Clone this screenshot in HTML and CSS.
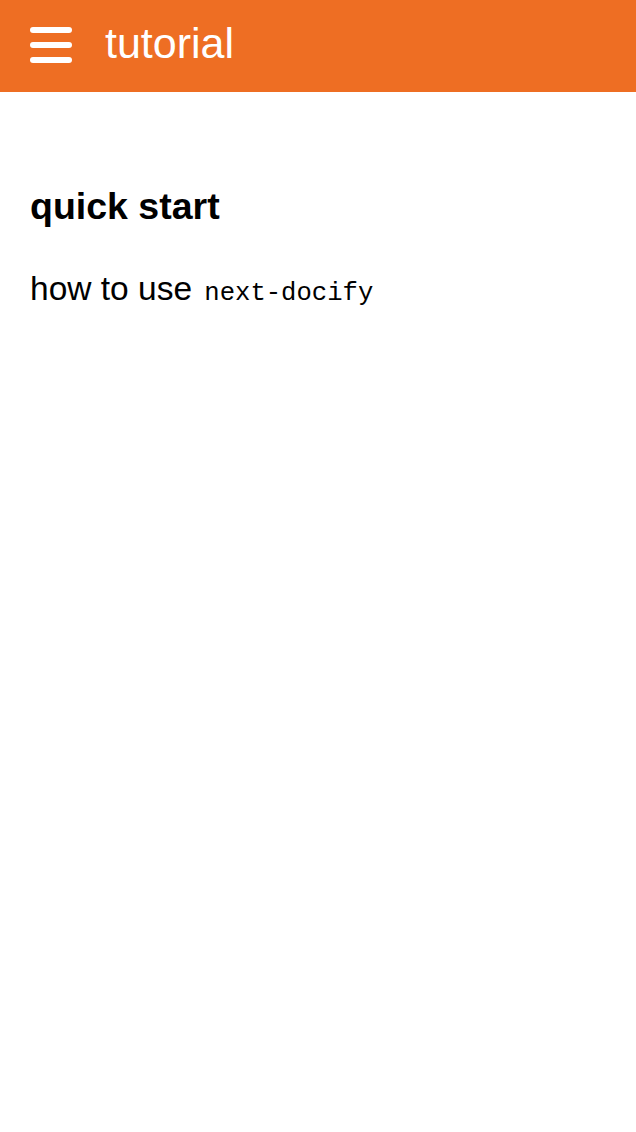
FILE: index.html
```html
<!DOCTYPE html>
<html>
<head>
<meta charset="utf-8">
<link rel="stylesheet" href="styles.css">
</head>
<body>
<header class="topbar">
  <svg class="menu" width="42" height="36" viewBox="0 0 42 36">
    <rect x="0" y="0" width="42" height="6" rx="3" fill="#fff"/>
    <rect x="0" y="15" width="42" height="6" rx="3" fill="#fff"/>
    <rect x="0" y="30" width="42" height="6" rx="3" fill="#fff"/>
  </svg>
  <span class="title">tutorial</span>
</header>
<main class="content">
  <h2 class="heading">quick start</h2>
  <p class="text">how to use <code class="code">next-docify</code></p>
</main>
</body>
</html>
```
FILE: styles.css
```css
html, body {
  margin: 0;
  padding: 0;
  background: #fff;
  font-family: "Liberation Sans", Arial, sans-serif;
  color: #000;
}
.topbar {
  height: 92px;
  background: #ee6e23;
  display: flex;
  align-items: center;
  padding: 0 30px;
  gap: 33px;
}
.menu {
  display: block;
  flex: none;
  margin-top: -2px;
}
.title {
  color: #fff;
  font-size: 43px;
  line-height: 1;
  margin-top: -6px;
}
.content {
  padding: 0 30px;
}
.heading {
  margin: 92px 0 0;
  font-size: 37.5px;
  font-weight: bold;
  line-height: 1.2;
}
.text {
  margin: 40px 0 0;
  font-size: 33.5px;
  line-height: 1.2;
}
.code {
  font-family: "Liberation Mono", "Courier New", monospace;
  font-size: 25.6px;
  margin-left: 3px;
}
```
